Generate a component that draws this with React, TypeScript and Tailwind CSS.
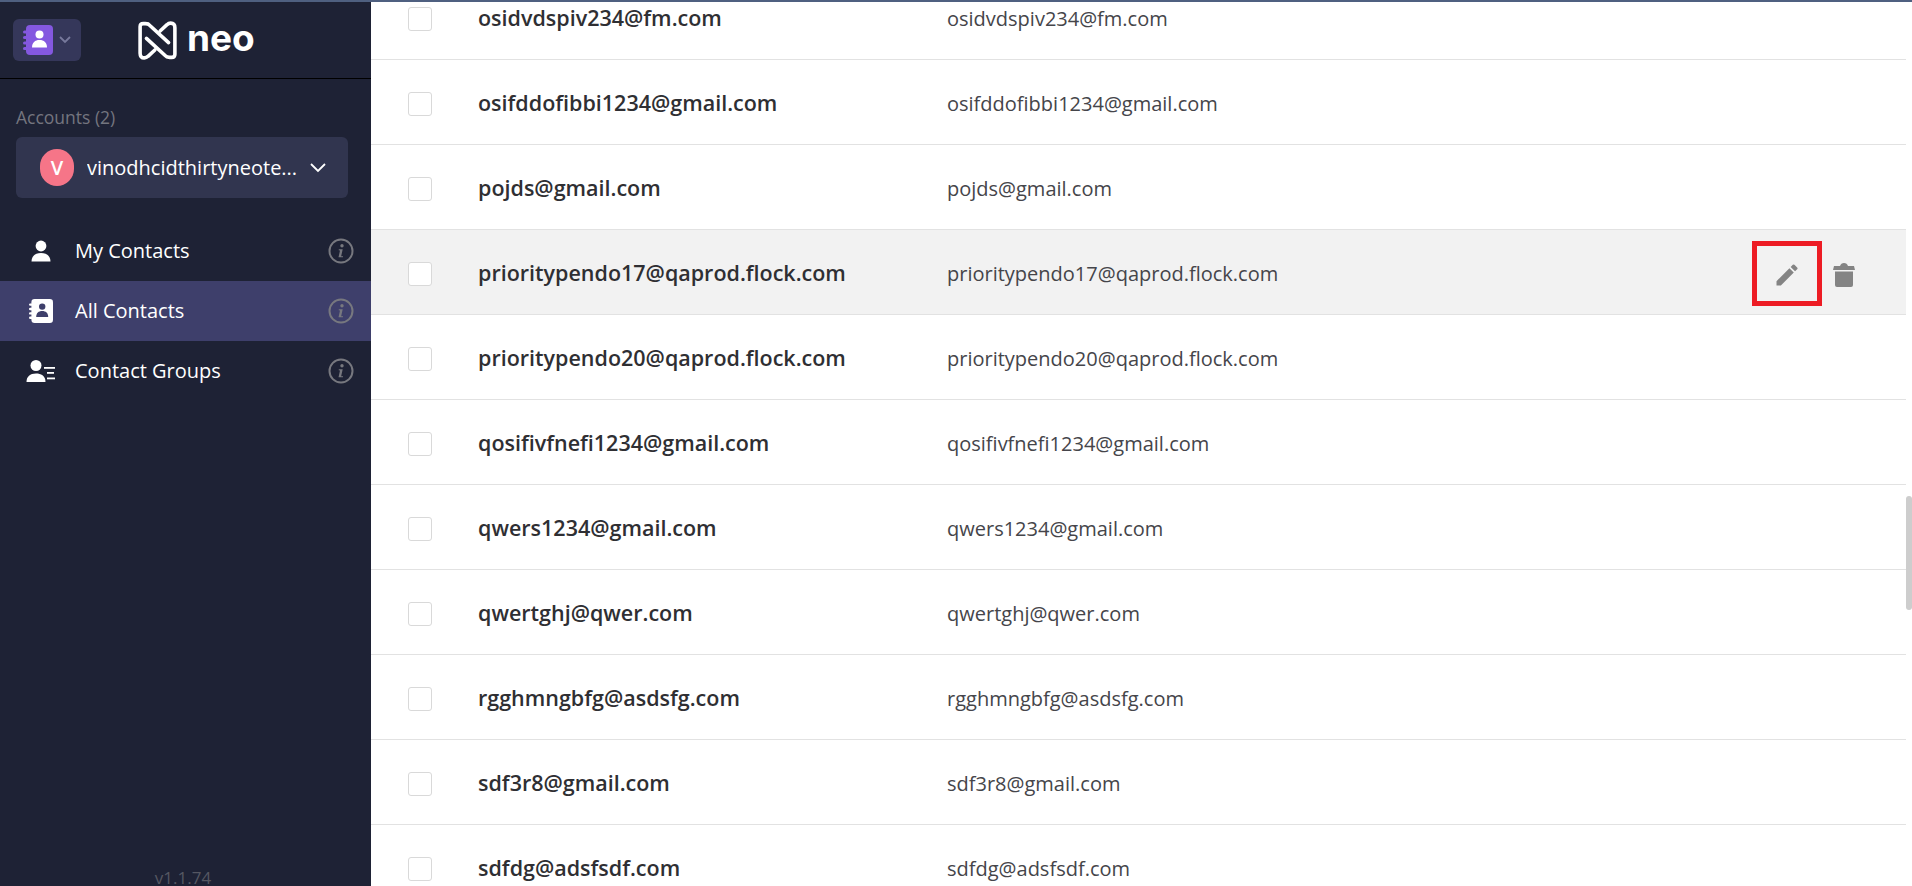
import React from 'react';
import { MdEdit } from 'react-icons/md';

const contacts = [
  'osidvdspiv234@fm.com',
  'osifddofibbi1234@gmail.com',
  'pojds@gmail.com',
  'prioritypendo17@qaprod.flock.com',
  'prioritypendo20@qaprod.flock.com',
  'qosifivfnefi1234@gmail.com',
  'qwers1234@gmail.com',
  'qwertghj@qwer.com',
  'rgghmngbfg@asdsfg.com',
  'sdf3r8@gmail.com',
  'sdfdg@adsfsdf.com',
];

const InfoIcon = () => (
  <svg width="26" height="26" viewBox="0 0 26 26" fill="none" className="text-[#77787f]">
    <circle cx="13" cy="13" r="11.5" stroke="currentColor" strokeWidth="2" />
    <circle cx="14" cy="7.8" r="1.7" fill="currentColor" />
    <path d="M10.8 11.3h3.9l-1.5 6.6c-.1.5.4.6 1.7.2v1.2H10.6c-.1-.5 0-.8.2-1.4l1.2-5.4-1.3-.2z" fill="currentColor" />
  </svg>
);

const PersonIcon = () => (
  <svg width="20" height="22" viewBox="0 0 20 22" fill="currentColor">
    <circle cx="10" cy="6" r="5.4" />
    <path d="M0.5 21.5c0-5.4 3.6-8.5 9.500-8.500s9.500 3.100 9.500 8.500z" />
  </svg>
);

// notebook with rings down the left edge and a person on the cover
const BookIcon = ({ size, cover, person }: { size: number; cover: string; person: string }) => (
  <svg width={size} height={size} viewBox="0 0 30 30">
    <rect x="3" y="0" width="27" height="30" rx="4" fill={cover} />
    <rect x="0" y="5.500" width="5" height="3" rx="1.500" fill={cover} />
    <rect x="0" y="11" width="5" height="3" rx="1.500" fill={cover} />
    <rect x="0" y="16.500" width="5" height="3" rx="1.500" fill={cover} />
    <rect x="0" y="22" width="5" height="3" rx="1.500" fill={cover} />
    <circle cx="16.500" cy="9.500" r="4" fill={person} />
    <path d="M9 22.500c0-5 3-7.500 7.500-7.500s7.500 2.500 7.500 7.500z" fill={person} />
  </svg>
);

const GroupIcon = () => (
  <svg width="30" height="24" viewBox="0 0 30 24" fill="currentColor">
    <circle cx="10" cy="6.500" r="5.500" />
    <path d="M0.500 23c0-5.500 3.600-8.500 9.500-8.500 2.600 0 4.800.6 6.500 1.800 1.900 1.400 3 3.600 3 6.700z" />
    <rect x="18" y="8" width="11" height="1.800" />
    <rect x="21" y="13" width="7" height="1.800" />
    <rect x="21" y="18.500" width="8" height="1.800" />
  </svg>
);

const TrashIcon = () => (
  <svg width="22" height="26" viewBox="0 0 22 26" fill="currentColor" className="text-[#848484]">
    <path d="M0 8l1-4h6q1-3 4-3t4 3h6l1 4z" />
    <path d="M2 9.500h18V23a2 2 0 0 1-2 2H4a2 2 0 0 1-2-2z" />
  </svg>
);

const NeoLogo = () => (
  <svg width="39" height="39" viewBox="0 0 37 36" fill="none" stroke="white" strokeWidth="3.400" strokeLinecap="round" strokeLinejoin="round">
    <path d="M29 20L11 3.500Q10 2 7 2H5Q2 2 2 5V30Q2 34.500 6 34.500Q8 34.500 9.500 33L16 27" />
    <path d="M8 16L26 32.500Q27 34 30 34H32Q35 34 35 31V6Q35 1.500 31 1.500Q29 1.500 27.500 3L21 9" />
  </svg>
);

const menu = [
  { label: 'My Contacts', icon: <PersonIcon /> },
  { label: 'All Contacts', icon: <BookIcon size={24} cover="#ffffff" person="#3e3f6b" />, active: true },
  { label: 'Contact Groups', icon: <GroupIcon /> },
];

const Sidebar = () => (
  <aside className="w-[371px] shrink-0 bg-[#1e2235] flex flex-col text-white">
    <div className="h-[77px] shrink-0 flex items-center pl-[13px] border-b border-black">
      <button className="w-[68px] h-[42px] bg-[#35375a] rounded-md flex items-center pl-[10px] gap-[6px]">
        <BookIcon size={30} cover="#8458e0" person="#ffffff" />
        <svg width="12" height="8" viewBox="0 0 12 8" fill="none" stroke="#77799c" strokeWidth="1.800">
          <path d="M1 1l5 5 5-5" />
        </svg>
      </button>
      <div className="ml-[57px] flex items-center gap-[10px]">
        <NeoLogo />
        <span className="font-['Inter',sans-serif] font-bold text-[37px] leading-none -mt-[5px]">neo</span>
      </div>
    </div>
    <div className="mt-[27px] ml-4 text-[17.500px] leading-[22px] text-[#74757f]">Accounts (2)</div>
    <div className="mx-4 mt-[9px] w-[332px] h-[61px] shrink-0 bg-[#31354f] rounded-md flex items-center pl-6 pr-[22px]">
      <div className="w-[34px] h-[37px] rounded-full bg-[#f67588] flex items-center justify-center font-semibold text-[20px] shrink-0">V</div>
      <span className="ml-[13px] text-[20px] truncate flex-1">vinodhcidthirtyneote...</span>
      <svg width="16" height="10" viewBox="0 0 16 10" fill="none" stroke="white" strokeWidth="1.800" className="ml-3 shrink-0">
        <path d="M1 1l7 7 7-7" />
      </svg>
    </div>
    <nav className="mt-[23px]">
      {menu.map((item) => (
        <div
          key={item.label}
          className={`h-[60px] flex items-center ${item.active ? 'bg-[#3e3f6b]' : ''}`}
        >
          <div className="w-[75px] flex justify-center pl-[8px] pr-[2px]">{item.icon}</div>
          <span className="text-[20px] flex-1">{item.label}</span>
          <div className="pr-[17px]">
            <InfoIcon />
          </div>
        </div>
      ))}
    </nav>
    <div className="mt-auto text-center text-[17px] leading-[16px] text-[#555762] pr-[5px]">v1.1.74</div>
  </aside>
);

const Row = ({ email, hovered }: { email: string; hovered: boolean }) => (
  <div className={`h-[85px] shrink-0 flex items-center pt-[3px] pl-[37px] border-b border-[#e2e2e2] mr-[6px] ${hovered ? 'bg-[#f2f2f2]' : ''}`}>
    <div className="w-6 h-6 border border-[#d9d9d9] rounded-[3px] bg-white shrink-0" />
    <div className="w-[515px] pl-[46px] shrink-0 text-[21.500px] font-semibold text-[#2f2f33]">{email}</div>
    <div className="flex-1 text-[20px] text-[#45454a]">{email}</div>
    {hovered && (
      <div className="flex items-center pr-[51px]">
        <div className="w-[70px] h-[65px] border-[5px] border-[#ed1c24] flex items-center justify-center pt-[3px]">
          <MdEdit size={28} className="text-[#848484]" />
        </div>
        <div className="ml-[11px] mt-[2px]">
          <TrashIcon />
        </div>
      </div>
    )}
  </div>
);

export default function App() {
  return (
    <div className="h-[886px] flex flex-col overflow-hidden bg-white font-['Open_Sans',sans-serif]">
      <div className="h-0.5 shrink-0 bg-[#4f6080]" />
      <div className="flex-1 min-h-0 flex">
        <Sidebar />
        <main className="relative flex-1 min-w-0 overflow-hidden">
          <div className="-mt-[27px] flex flex-col">
            {contacts.map((email) => (
              <Row key={email} email={email} hovered={email === 'prioritypendo17@qaprod.flock.com'} />
            ))}
          </div>
          {/* scroll thumb */}
          <div className="absolute right-0 top-[494px] w-1.5 h-[114px] rounded-full bg-[#cdcdcd]" />
        </main>
      </div>
    </div>
  );
}
